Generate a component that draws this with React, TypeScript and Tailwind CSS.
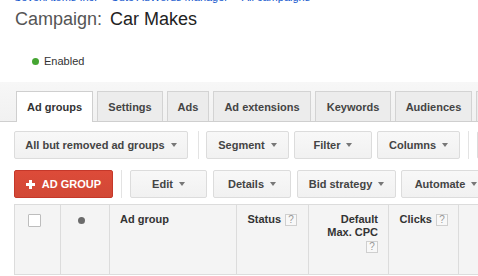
import React from "react";

const Caret = () => (
  <span className="ml-[6px] inline-block h-0 w-0 border-x-[3.5px] border-t-[4px] border-x-transparent border-t-[#777]" />
);

const Btn = ({ label, w, ml, caret = true }: { label: string; w: string; ml: string; caret?: boolean }) => (
  <div
    className={`${w} ${ml} flex h-[28px] shrink-0 items-center justify-center rounded-[2px] border border-[#dcdcdc] bg-gradient-to-b from-[#f8f8f8] to-[#f1f1f1] text-[11px] font-bold text-[#444]`}
  >
    <span>{label}</span>
    {caret && <Caret />}
  </div>
);

const Sep = ({ ml }: { ml: string }) => <div className={`${ml} h-[28px] w-px shrink-0 bg-[#e3e3e3]`} />;

const Tab = ({ label, w, active = false }: { label: string; w: string; active?: boolean }) =>
  active ? (
    <div className={`${w} -mb-px flex h-[31px] shrink-0 items-start justify-center border border-b-0 border-[#cfcfcf] bg-white pt-[7px] text-[11px] font-bold text-[#333]`}>
      {label}
    </div>
  ) : (
    <div className={`${w} flex h-[30px] shrink-0 items-start justify-center border border-b-0 border-[#d3d3d3] bg-[#ececec] pt-[7px] text-[11px] font-bold text-[#444]`}>
      {label}
    </div>
  );

const Help = () => (
  <span className="inline-flex h-[12px] w-[12px] shrink-0 items-center justify-center border border-[#cfcfcf] bg-[#f8f8f8] text-[10px] font-normal leading-none text-[#999]">
    ?
  </span>
);

export default function App() {
  return (
    <div
      className="h-[276px] w-[478px] overflow-hidden bg-white"
      style={{ fontFamily: '"Liberation Sans", Arial, sans-serif' }}
    >
      {/* breadcrumb */}
      <div className="-mt-[9px] ml-[14px] flex h-[13px] whitespace-nowrap text-[11px] leading-[13px] text-[#1155cc]">
        <span>SevenAtoms Inc.</span>
        <span className="mx-[5px] text-[#777]">›</span>
        <span>Cute AdWords Manager</span>
        <span className="mx-[5px] text-[#777]">›</span>
        <span>All campaigns</span>
        <span className="ml-[5px] text-[#777]">›</span>
      </div>

      {/* title */}
      <div className="ml-[15px] mt-[4px] flex h-[22px] whitespace-nowrap text-[18px] leading-[22px]">
        <span className="text-[#555]">Campaign:</span>
        <span className="ml-[8px] text-[#222]">Car Makes</span>
      </div>

      {/* status */}
      <div className="ml-[32px] mt-[25px] flex h-[13px] items-center text-[11px] leading-[13px] text-[#333]">
        <span className="mr-[5px] h-[7px] w-[7px] rounded-full bg-[#45a532]" />
        <span>Enabled</span>
      </div>

      {/* tab strip */}
      <div className="mt-[14px] flex h-[40px] w-[600px] items-end gap-[4px] border-b border-[#cfcfcf] bg-gradient-to-b from-[#f7f7f7] to-[#f1f1f1] pl-[16px]">
        <Tab label="Ad groups" w="w-[77px]" active />
        <Tab label="Settings" w="w-[66px]" />
        <Tab label="Ads" w="w-[42px]" />
        <Tab label="Ad extensions" w="w-[98px]" />
        <Tab label="Keywords" w="w-[76px]" />
        <Tab label="Audiences" w="w-[77px]" />
        <Tab label="Dimensions" w="w-[90px]" />
      </div>

      {/* toolbar row 1 */}
      <div className="mt-[9px] flex w-[700px]">
        <Btn label="All but removed ad groups" w="w-[174px]" ml="ml-[14px]" />
        <Sep ml="ml-[10px]" />
        <Btn label="Segment" w="w-[83px]" ml="ml-[7px]" />
        <Btn label="Filter" w="w-[78px]" ml="ml-[5px]" />
        <Btn label="Columns" w="w-[83px]" ml="ml-[5px]" />
        <Sep ml="ml-[8px]" />
        <Btn label="Search" w="w-[90px]" ml="ml-[8px]" />
      </div>

      {/* toolbar row 2 */}
      <div className="mt-[11px] flex w-[700px]">
        <div className="ml-[14px] flex h-[28px] w-[99px] shrink-0 items-center justify-center rounded-[2px] border border-[#c5382a] bg-gradient-to-b from-[#dd4b39] to-[#d14836] text-[11px] font-bold text-white">
          <svg width="9" height="9" viewBox="0 0 9 9" className="mr-[7px]">
            <rect x="3" y="0" width="3" height="9" fill="white" />
            <rect x="0" y="3" width="9" height="3" fill="white" />
          </svg>
          <span>AD GROUP</span>
        </div>
        <Sep ml="ml-[8px]" />
        <Btn label="Edit" w="w-[77px]" ml="ml-[8px]" />
        <Btn label="Details" w="w-[78px]" ml="ml-[6px]" />
        <Btn label="Bid strategy" w="w-[99px]" ml="ml-[6px]" />
        <Btn label="Automate" w="w-[90px]" ml="ml-[5px]" />
      </div>

      {/* table header */}
      <div className="ml-[14px] mt-[6px] flex h-[71px] w-[700px] border-y border-[#dcdcdc] bg-[#f4f4f4] text-[11px] font-bold leading-[13px] text-[#333]">
        <div className="w-[46px] shrink-0 border-l border-[#dcdcdc] pl-[13px] pt-[9px]">
          <div className="h-[13px] w-[13px] rounded-[1px] border border-[#bdbdbd] bg-white" />
        </div>
        <div className="w-[49px] shrink-0 border-l border-[#dcdcdc] pl-[17px] pt-[12px]">
          <div className="h-[7px] w-[7px] rounded-full bg-[#6b6b6b]" />
        </div>
        <div className="w-[127px] shrink-0 border-l border-[#dcdcdc] pl-[10px] pt-[8px]">Ad group</div>
        <div className="flex w-[72px] shrink-0 justify-end border-l border-[#dcdcdc] pr-[11px] pt-[8px]">
          <div className="flex h-[13px] items-center gap-[4px]">
            <span>Status</span>
            <Help />
          </div>
        </div>
        <div className="w-[80px] shrink-0 border-l border-[#dcdcdc] pr-[10px] pt-[8px] text-right">
          <div>Default</div>
          <div>Max. CPC</div>
          <div className="mt-[2px] flex justify-end">
            <Help />
          </div>
        </div>
        <div className="flex w-[70px] shrink-0 justify-end border-l border-[#dcdcdc] pr-[10px] pt-[8px]">
          <div className="flex h-[13px] items-center gap-[4px]">
            <span>Clicks</span>
            <Help />
          </div>
        </div>
        <div className="w-[200px] shrink-0 border-l border-[#dcdcdc]" />
      </div>
    </div>
  );
}
